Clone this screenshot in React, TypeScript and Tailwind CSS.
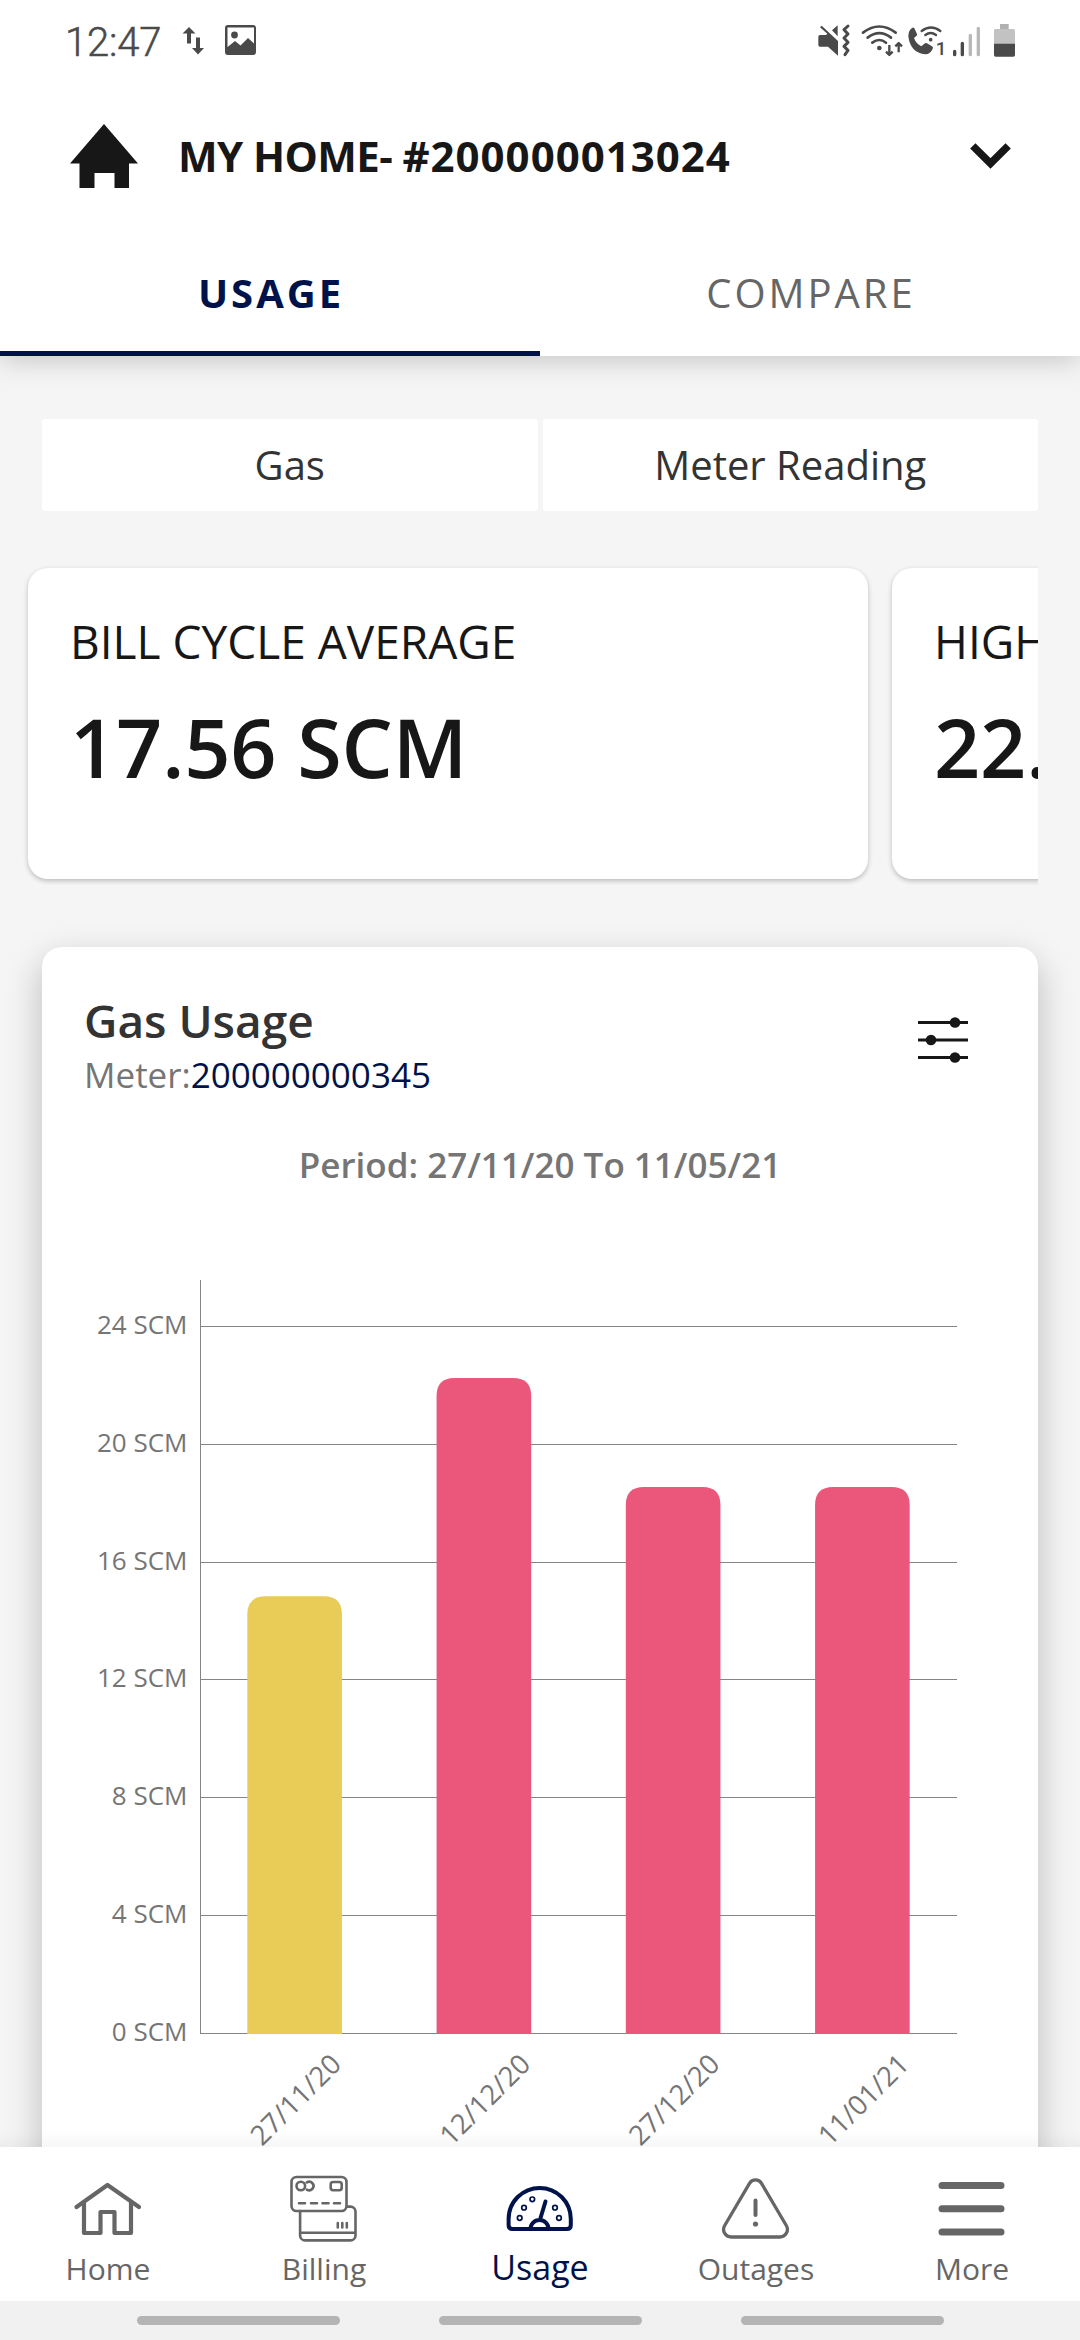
import type { ReactNode } from 'react';
import clsx from 'clsx';

type Reading = { date: string; value: number; color: string };

const READINGS: Reading[] = [
  { date: '27/11/20', value: 14.84, color: '#e8cc57' },
  { date: '12/12/20', value: 22.25, color: '#ea577a' },
  { date: '27/12/20', value: 18.55, color: '#ea577a' },
  { date: '11/01/21', value: 18.55, color: '#ea577a' },
];

const TICKS = [0, 4, 8, 12, 16, 20, 24];

function StatusBar() {
  return (
    <div className="flex h-[84px] shrink-0 justify-between pr-[50px] pl-[65px] text-[#4a4a4a]">
      <div className="flex">
        <span className="w-[111px] font-['Roboto',sans-serif] text-[40px] leading-[85px] font-light tracking-[-0.2px] [-webkit-text-stroke:0.5px]">
          12:47
        </span>
        <svg width="90" height="84" viewBox="176 0 90 84" fill="currentColor">
          <path d="M189 27l6.5 6.500h-4.500v10h-4v-10H182.500zM198 54.500l-6-6.500h4V37.500h4V48h4z" />
          <path
            fillRule="evenodd"
            d="M228 25h25a3 3 0 0 1 3 3v24a3 3 0 0 1-3 3h-25a3 3 0 0 1-3-3V28a3 3 0 0 1 3-3zM227.500 27.500v19.500l7.500-6 5.500 4.500 7.500-7.500 6 5.500V27.500z"
          />
          <circle cx="234.500" cy="35" r="3.400" />
        </svg>
      </div>

      {/* Mute, wifi, wifi call, signal, battery */}
      <svg width="220" height="84" viewBox="0 -45 660 252" fill="none" stroke="currentColor">
        <path
          d="M30 60h18l4-4-22-19 5-5 49 46v44l-30-27H30q-5 0-5-5V65q0-5 5-5zM66 46l17-15v33z"
          fill="currentColor"
          stroke="none"
        />
        <path d="M114 33l-12 11 12 13-12 12 12 13-12 12 12 12-9 13" strokeWidth="9" strokeLinecap="round" strokeLinejoin="round" />
        <g strokeWidth="8" strokeLinecap="round">
          <path d="M159 53q49-37 98 0M173 68q35-27 70 0M187 83q21-16 41 0" />
        </g>
        <circle cx="208" cy="99" r="7" fill="currentColor" stroke="none" />
        <path d="M238 90v28M228 110l10 10 10-10M266 112V84M256 94l10-10 10 10" strokeWidth="7" strokeLinejoin="round" />
        <path
          d="M306 39q4-3 7 1l8 17q1 4-2 6l-7 6q6 17 22 25l9-8q4-3 8-1l15 9q5 3 2 7-6 16-22 17-46-5-51-55 0-16 11-24z"
          fill="currentColor"
          stroke="none"
        />
        <path d="M335 48q28-21 56 0M346 60q16-12 32 0" strokeWidth="7" strokeLinecap="round" />
        <circle cx="362" cy="74" r="5.500" fill="currentColor" stroke="none" />
        <text x="377" y="119" fontSize="56" fill="currentColor" stroke="none" className="font-['Roboto',sans-serif] font-medium">
          1
        </text>
        <g strokeWidth="10" strokeLinecap="round">
          <path d="M434 109v10M457 85v34" />
          <path d="M481 61v58M505 40v79" stroke="#b8b8b8" />
        </g>
        <path d="M570 27h26v15h-26z" fill="#b0b0b0" stroke="none" />
        <path d="M556 42h54q5 0 5 5v40h-63V47q0-5 4-5z" fill="#c2c2c2" stroke="none" />
        <path d="M552 86h63v34q0 5-5 5h-53q-5 0-5-5z" fill="currentColor" stroke="none" />
      </svg>
    </div>
  );
}

function AccountPicker() {
  return (
    <button className="flex h-[143px] w-full items-center pr-[69px] pl-[70px] text-[#171717]">
      <svg width="68" height="64" viewBox="0 0 68 64" fill="currentColor">
        <path d="M34 0l34 39.500h-9V64H44.500V49h-20v15H9.500V39.500H0z" />
      </svg>
      <span className="ml-[40px] text-[42px] leading-none font-bold tracking-[-0.6px] whitespace-nowrap">
        MY HOME- <span className="tracking-[1px]">#200000013024</span>
      </span>
      <svg className="ml-auto" width="41" height="26" viewBox="0 0 41 26" fill="none" stroke="currentColor" strokeWidth="7.500">
        <path d="M2.800 2.800L20.500 20.500 38.200 2.800" />
      </svg>
    </button>
  );
}

function Tab({ label, active }: { label: string; active?: boolean }) {
  return (
    <button
      className={clsx(
        'flex h-[129px] flex-1 items-center justify-center border-b-[5px] pt-[7px] pl-[2px] text-[40px] leading-none tracking-[3px]',
        active ? 'border-[#00124a] font-bold text-[#00124a]' : 'border-transparent text-[#666]'
      )}
    >
      {label}
    </button>
  );
}

function StatCard({ label, value }: { label: string; value: string }) {
  return (
    <div className="h-[311px] w-[840px] shrink-0 rounded-[20px] bg-white pt-[43px] pl-[42px] whitespace-nowrap text-[#171717] shadow-[0_2px_5px_rgba(0,0,0,0.24)]">
      <div className="text-[46px] leading-[60px]">{label}</div>
      <div className="mt-[26px] text-[81px] leading-[100px] font-semibold tracking-[-0.2px]">{value}</div>
    </div>
  );
}

function UsageChart() {
  const baseY = 2033.5;
  const unit = 29.46;
  const left = 200;
  const right = 957;
  const slot = (right - left) / READINGS.length;
  const barWidth = slot / 2;

  return (
    <svg className="-mt-px block" width="996" height="959" viewBox="42 1188 996 959" fill="#757575">
      <path d="M200.500 1280V2034" stroke="#858585" strokeWidth="1" />
      {TICKS.map((t) => {
        const y = Math.floor(baseY - t * unit) + 0.5;
        return (
          <g key={t}>
            <path d={`M${left} ${y}H${right}`} stroke="#858585" strokeWidth="1" />
            <text x="187.500" y={y + 7.5} fontSize="26" textAnchor="end">
              {t} SCM
            </text>
          </g>
        );
      })}
      {READINGS.map((r, i) => {
        const x = left + slot * i + slot / 4;
        const top = baseY - r.value * unit;
        return (
          <g key={r.date}>
            <path
              d={`M${x} ${baseY + 0.5}V${top + 18}q0-18 18-18h${barWidth - 36}q18 0 18 18V${baseY + 0.5}z`}
              fill={r.color}
            />
            <text transform={`translate(${x + barWidth + 1} 2066) rotate(-45)`} fontSize="27.500" textAnchor="end">
              {r.date}
            </text>
          </g>
        );
      })}
    </svg>
  );
}

function UsageCard() {
  return (
    <section className="mx-[42px] mt-[68px] h-[1400px] rounded-[20px] bg-white pt-[43px] shadow-[0_14px_36px_rgba(0,0,0,0.24)]">
      <div className="flex justify-between pr-[70px] pl-[42px]">
        <div>
          <h2 className="text-[46px] leading-[60px] font-semibold text-[#333]">Gas Usage</h2>
          <p className="mt-px text-[35px] leading-[48px] text-[#757575]">
            Meter:<span className="text-[#00124a]">200000000345</span>
          </p>
        </div>
        <svg className="mt-[26px]" width="50" height="48" viewBox="0 0 50 48" fill="#171717" stroke="#171717" strokeWidth="3">
          <path d="M0 6.500h50M0 24h50M0 41.500h50" />
          <g stroke="none">
            <circle cx="37" cy="6.500" r="5.300" />
            <circle cx="13" cy="24" r="5.300" />
            <circle cx="37" cy="41.500" r="5.300" />
          </g>
        </svg>
      </div>
      <p className="mt-[42px] text-center text-[35px] leading-[48px] font-semibold text-[#757575]">
        Period: 27/11/20 To 11/05/21
      </p>
      <UsageChart />
    </section>
  );
}

function NavItem({ label, active, children }: { label: string; active?: boolean; children: ReactNode }) {
  return (
    <button
      className={clsx(
        'flex flex-1 flex-col items-center pt-[25px]',
        active ? 'text-[34px] text-[#00124a]' : 'text-[30px] text-[#666]'
      )}
    >
      <svg width="72" height="72" viewBox="0 0 72 72" fill="none" stroke="currentColor" strokeLinecap="round" strokeLinejoin="round">
        {children}
      </svg>
      <span className={clsx('leading-[40px]', active ? 'mt-[3px]' : 'mt-[5px]')}>{label}</span>
    </button>
  );
}

function BottomNav() {
  return (
    <nav className="relative flex h-[154px] shrink-0 bg-white">
      {/* Fade over the scrolled content */}
      <div className="absolute inset-x-0 -top-[16px] h-[16px] bg-linear-to-t from-black/[0.035] to-transparent" />
      <NavItem label="Home">
        <path d="M4.500 35L35.500 13 67 35" strokeWidth="4.200" />
        <path d="M12 31v30h16.500V40h14v21H59V31" strokeWidth="4.200" />
      </NavItem>
      <NavItem label="Billing">
        <g strokeWidth="2.600">
          <rect x="3.500" y="5" width="55" height="34" rx="5" />
          <circle cx="12.800" cy="14" r="4.300" />
          <path d="M18.800 10.400a4.300 4.300 0 1 1 0 7.200" />
          <rect x="42.700" y="10" width="11" height="8.200" rx="2.400" />
          <path d="M11 31.300h6M23 31.300h6M34.500 31.300h6M46 31.300h6" />
          <path d="M12.100 39v24.400a5 5 0 0 0 5 5h45.400a5 5 0 0 0 5-5V39.600a5 5 0 0 0-5-5H59M12.100 60.700h55.400" />
          <path d="M49.800 51v4.500M54.300 51v4.500M58.800 51v4.500" />
        </g>
      </NavItem>
      <NavItem label="Usage" active>
        <path
          d="M4.600 47a31.100 31.100 0 0 1 62.200 0v6q0 4-4 4H8.600q-4 0-4-4z"
          strokeWidth="4"
        />
        <path d="M26.500 57a9 9 0 0 1 18 0M36.500 46l5-16.500" strokeWidth="4" />
        <g strokeWidth="1.700">
          <circle cx="15.700" cy="46" r="2.300" />
          <circle cx="20" cy="35.700" r="2.300" />
          <circle cx="28.300" cy="27.300" r="2.300" />
          <circle cx="51" cy="35.700" r="2.300" />
          <circle cx="55" cy="46" r="2.300" />
        </g>
      </NavItem>
      <NavItem label="Outages">
        <path
          d="M29.500 11.300L4.700 53.500a7.600 7.600 0 0 0 6.600 11.500H59.700a7.600 7.600 0 0 0 6.600-11.500L41.500 11.300a7 7 0 0 0-12 0z"
          strokeWidth="3.300"
        />
        <path d="M35.500 28.500v14.500" strokeWidth="4" />
        <circle cx="35.500" cy="52" r="2.600" fill="currentColor" stroke="none" />
      </NavItem>
      <NavItem label="More">
        <path d="M6 13.500h59M6 36.700h59M6 60h59" strokeWidth="7" />
      </NavItem>
    </nav>
  );
}

export default function App() {
  return (
    <div className="flex h-[2340px] w-[1080px] flex-col overflow-hidden bg-[#f5f5f5] font-['Open_Sans','Noto_Sans',sans-serif]">
      <header className="relative z-10 shrink-0 bg-white shadow-[0_5px_26px_rgba(0,0,0,0.19)]">
        <StatusBar />
        <AccountPicker />
        <div className="flex">
          <Tab label="USAGE" active />
          <Tab label="COMPARE" />
        </div>
      </header>

      <main className="min-h-0 flex-1 overflow-hidden">
        <div className="mx-[42px] mt-[63px] flex h-[92px] gap-[5px] text-[40px] text-[#333]">
          <button className="flex-1 rounded-[3px] bg-white pb-px">Gas</button>
          <button className="flex-1 rounded-[3px] bg-white pb-px">Meter Reading</button>
        </div>

        <div className="mt-[57px] flex w-[1038px] gap-[24px] overflow-x-clip pl-[28px]">
          <StatCard label="BILL CYCLE AVERAGE" value="17.56 SCM" />
          <StatCard label="HIGHEST USAGE" value="22.27 SCM" />
        </div>

        <UsageCard />
      </main>

      <BottomNav />

      {/* System gesture hints */}
      <div className="flex h-[39px] shrink-0 items-start justify-center gap-[99px] bg-[#f1f1f1] pt-[15px]">
        <span className="h-[9px] w-[203px] rounded-full bg-[#b4b4b4]" />
        <span className="h-[9px] w-[203px] rounded-full bg-[#b4b4b4]" />
        <span className="h-[9px] w-[203px] rounded-full bg-[#b4b4b4]" />
      </div>
    </div>
  );
}
